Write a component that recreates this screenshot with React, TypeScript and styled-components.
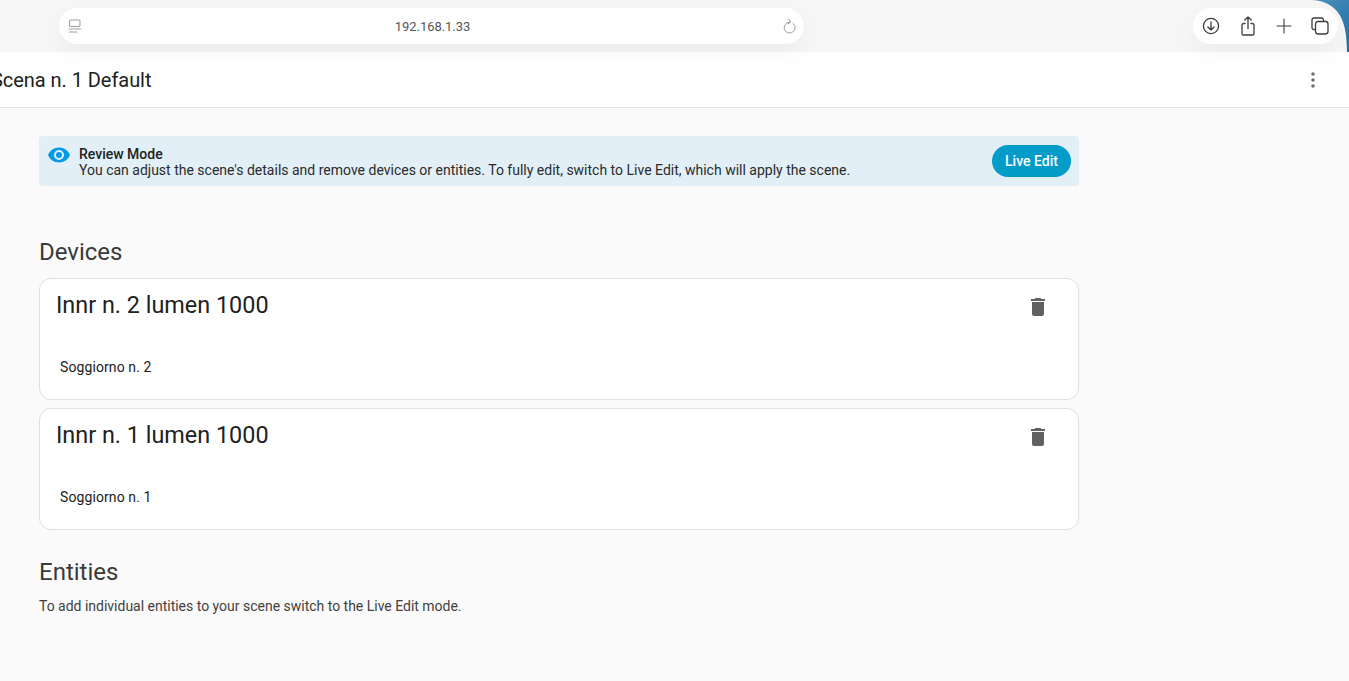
import React from "react";
import styled, { createGlobalStyle } from "styled-components";

const GlobalStyle = createGlobalStyle`
  html, body {
    margin: 0;
    padding: 0;
    height: 100%;
    overflow: hidden;
    background: #fafafa;
    font-family: Roboto, "Liberation Sans", sans-serif;
    color: #212121;
  }
`;

const Page = styled.div`
  position: relative;
  width: 1349px;
  height: 681px;
  overflow: hidden;
  background: #fafafa;
`;

// Safari chrome
const BrowserBar = styled.div`
  position: relative;
  z-index: 2;
  height: 52px;
  box-sizing: border-box;
  padding: 8px 11px 8px 59px;
  display: flex;
  justify-content: space-between;
  background: #f6f6f7;
`;

const WallpaperCorner = styled.svg`
  position: absolute;
  top: 0;
  right: 0;
`;

const UrlPill = styled.div`
  width: 745px;
  height: 36px;
  box-sizing: border-box;
  padding: 0 7px 0 9px;
  display: flex;
  align-items: center;
  justify-content: space-between;
  background: #ffffff;
  border-radius: 18px;
  box-shadow: 0 10px 24px rgba(0, 0, 0, 0.04);
`;

const UrlText = styled.span`
  font-size: 13px;
  letter-spacing: -0.05px;
  color: #555555;
`;

const ActionsPill = styled.div`
  position: relative;
  width: 145px;
  height: 36px;
  box-sizing: border-box;
  padding: 0 9px 0 9px;
  display: flex;
  align-items: center;
  justify-content: space-between;
  background: #ffffff;
  border-radius: 18px;
  box-shadow: 0 10px 24px rgba(0, 0, 0, 0.04);
`;

const ChromeIcon = styled.svg`
  display: block;
  flex: none;
  fill: none;
  stroke: ${(p) => p.color || "#3c3c3c"};
  stroke-width: ${(p) => p.$weight || 1.3};
  stroke-linecap: round;
  stroke-linejoin: round;
`;

// App header
const Header = styled.header`
  height: 56px;
  box-sizing: border-box;
  padding: 0 34px 0 0;
  display: flex;
  align-items: center;
  justify-content: space-between;
  background: #ffffff;
  border-bottom: 1px solid #e0e0e0;
`;

const Title = styled.h1`
  margin: 0 0 0 -9px;
  font-size: 20px;
  font-weight: 400;
  letter-spacing: -0.05px;
  color: #212121;
`;

const MenuDots = styled.svg`
  display: block;
  fill: #707070;
`;

const Content = styled.main`
  width: 1040px;
  margin-left: 39px;
  padding-top: 28px;
`;

const Alert = styled.div`
  height: 50px;
  box-sizing: border-box;
  padding: 2px 8px 0 8px;
  display: flex;
  align-items: center;
  gap: 8px;
  background: #e2eff7;
  border-radius: 4px;
`;

const AlertIcon = styled.svg`
  display: block;
  flex: none;
  align-self: flex-start;
  margin-top: 5px;
  fill: #039be5;
`;

const AlertBody = styled.div`
  flex: 1;
  font-size: 14px;
  line-height: 16px;
  color: #2b2b2b;
`;

const AlertTitle = styled.div`
  font-weight: 500;
  color: #212121;
`;

const LiveEditButton = styled.button`
  width: 79px;
  height: 32px;
  margin-top: -2px;
  padding: 0;
  border: none;
  border-radius: 16px;
  background: #039bc8;
  color: #ffffff;
  font-family: inherit;
  font-size: 14px;
  font-weight: 500;
`;

const SectionTitle = styled.h2`
  margin: ${(p) => p.$top}px 0 0;
  height: 28px;
  font-size: 24px;
  line-height: 28px;
  font-weight: 400;
  color: #3a3a3a;
`;

const DeviceList = styled.div`
  display: flex;
  flex-direction: column;
  gap: 8px;
  margin-top: 12px;
`;

const Card = styled.section`
  height: 122px;
  box-sizing: border-box;
  padding: 10px 28px 0 16px;
  background: #ffffff;
  border: 1px solid #e0e0e0;
  border-radius: 12px;
`;

const CardHead = styled.div`
  display: flex;
  align-items: flex-start;
  justify-content: space-between;
`;

const CardTitle = styled.h3`
  margin: 0;
  font-size: 23.4px;
  line-height: 32px;
  font-weight: 400;
  color: #212121;
`;

const TrashIcon = styled.svg`
  display: block;
  margin-top: 6px;
  fill: #616161;
`;

const AreaName = styled.div`
  margin: 36px 0 0 4px;
  font-size: 14px;
  line-height: 20px;
  letter-spacing: 0.1px;
  color: #212121;
`;

const HelpText = styled.p`
  margin: 10px 0 0;
  font-size: 14px;
  line-height: 20px;
  letter-spacing: -0.01px;
  color: #3f3f3f;
`;

const devices = [
  { name: "Innr n. 2 lumen 1000", area: "Soggiorno n. 2" },
  { name: "Innr n. 1 lumen 1000", area: "Soggiorno n. 1" },
];

export default function App() {
  return (
    <Page>
      <GlobalStyle />
      <BrowserBar>
        <WallpaperCorner width="40" height="52" viewBox="0 0 40 52">
          <defs>
            <linearGradient id="wall" x1="0" y1="0" x2="1" y2="1">
              <stop offset="0" stopColor="#4f93bd" />
              <stop offset="1" stopColor="#1f6fa6" />
            </linearGradient>
          </defs>
          <path d="M3 0H40V52H38C38 22 31 2 3 0Z" fill="url(#wall)" />
        </WallpaperCorner>
        <UrlPill>
          <ChromeIcon color="#a0a0a0" $weight={1.1} width="14" height="14" viewBox="0 0 14 14">
            <rect x="1.5" y="1" width="10.5" height="6.5" rx="1.2" />
            <path d="M1 10h12M1 13h8" />
          </ChromeIcon>
          <UrlText>192.168.1.33</UrlText>
          <ChromeIcon color="#9a9a9a" $weight={1} width="14" height="16" viewBox="0 0 14 16">
            <path d="M6.8 4.2A5.4 5.4 0 1 0 12 9.6C12 7.9 11.3 6.4 10 5.4" />
            <path d="M5.6 1.2 7.8 4 5 5.8" />
          </ChromeIcon>
        </UrlPill>
        <ActionsPill>
          <ChromeIcon width="18" height="18" viewBox="0 0 18 18">
            <circle cx="9" cy="9" r="7.6" />
            <path d="M9 5v8M5.9 10 9 13l3.1-3" />
          </ChromeIcon>
          <ChromeIcon width="18" height="20" viewBox="0 0 18 20">
            <path d="M6 7.5H4.6A1.6 1.6 0 0 0 3 9.1v8.3A1.6 1.6 0 0 0 4.6 19h8.8a1.6 1.6 0 0 0 1.6-1.6V9.1a1.6 1.6 0 0 0-1.6-1.6H12" />
            <path d="M9 12.5V1M5.8 4 9 1l3.2 3" />
          </ChromeIcon>
          <ChromeIcon $weight={1.1} width="16" height="16" viewBox="0 0 16 16">
            <path d="M8 1v14M1 8h14" />
          </ChromeIcon>
          <ChromeIcon width="18" height="18" viewBox="0 0 18 18">
            <path d="M3.5 12.5A2 2 0 0 1 1 10.6V3a2 2 0 0 1 2-2h7.6a2 2 0 0 1 1.9 2.5" />
            <rect x="4.5" y="4.5" width="12.5" height="12.5" rx="2.4" />
          </ChromeIcon>
        </ActionsPill>
      </BrowserBar>

      <Header>
        <Title>Scena n. 1 Default</Title>
        <MenuDots width="4" height="16" viewBox="0 0 4 16">
          <circle cx="2" cy="2" r="1.8" />
          <circle cx="2" cy="8" r="1.8" />
          <circle cx="2" cy="14" r="1.8" />
        </MenuDots>
      </Header>

      <Content>
        <Alert>
          <AlertIcon width="24" height="24" viewBox="0 0 24 24">
            <path d="M12 4.5C7 4.5 2.73 7.61 1 12c1.73 4.39 6 7.5 11 7.5s9.27-3.11 11-7.5c-1.73-4.39-6-7.5-11-7.5ZM12 17a5 5 0 1 1 0-10 5 5 0 0 1 0 10Zm0-8a3 3 0 1 0 0 6 3 3 0 0 0 0-6Z" />
          </AlertIcon>
          <AlertBody>
            <AlertTitle>Review Mode</AlertTitle>
            You can adjust the scene's details and remove devices or entities. To fully edit, switch to Live Edit, which will apply the scene.
          </AlertBody>
          <LiveEditButton>Live Edit</LiveEditButton>
        </Alert>

        <SectionTitle $top={52}>Devices</SectionTitle>
        <DeviceList>
          {devices.map((device) => (
            <Card key={device.name}>
              <CardHead>
                <CardTitle>{device.name}</CardTitle>
                <TrashIcon width="24" height="24" viewBox="0 0 24 24">
                  <path d="M19 4h-3.5l-1-1h-5l-1 1H5v2h14V4ZM6 19a2 2 0 0 0 2 2h8a2 2 0 0 0 2-2V7H6v12Z" />
                </TrashIcon>
              </CardHead>
              <AreaName>{device.area}</AreaName>
            </Card>
          ))}
        </DeviceList>

        <SectionTitle $top={28}>Entities</SectionTitle>
        <HelpText>To add individual entities to your scene switch to the Live Edit mode.</HelpText>
      </Content>
    </Page>
  );
}
